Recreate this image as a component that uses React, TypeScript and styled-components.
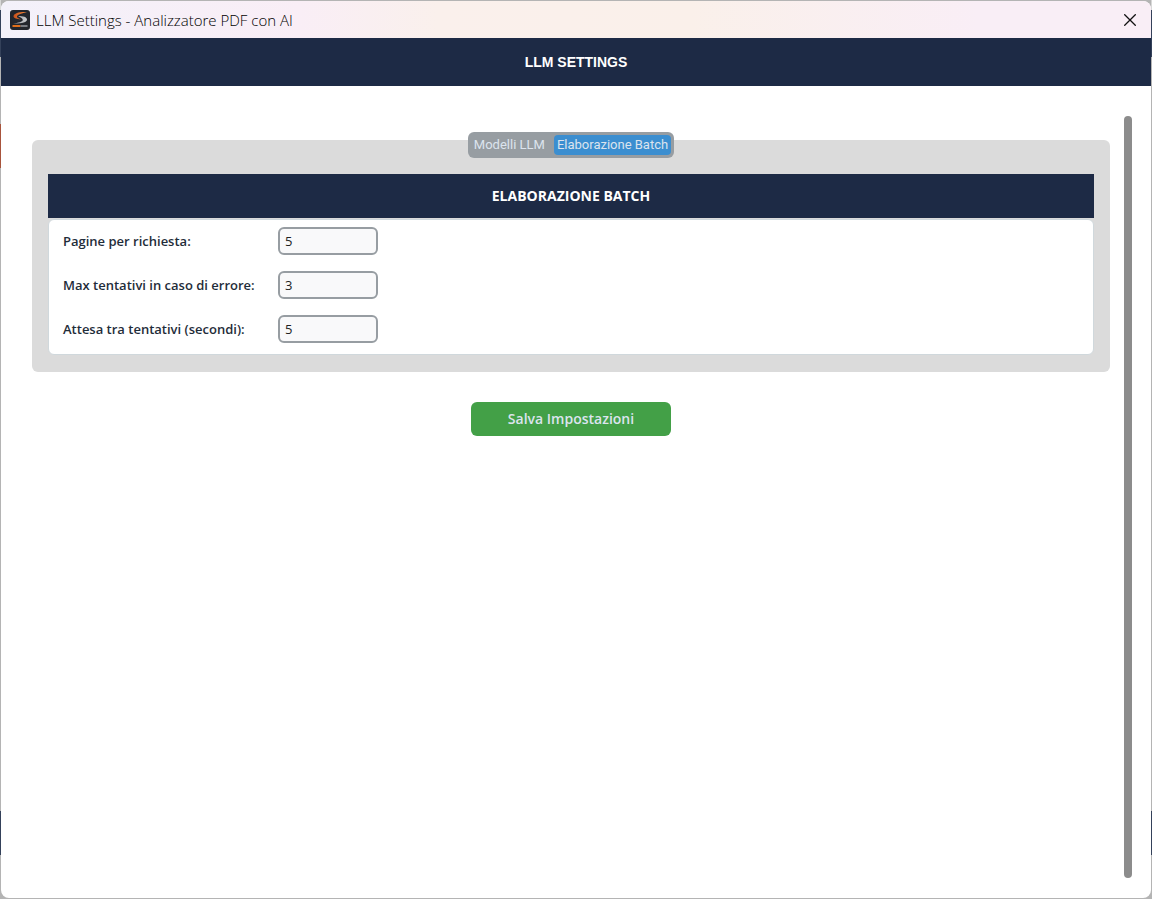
import React, { useState } from "react";
import styled, { createGlobalStyle } from "styled-components";

const navy = "#1d2a45";
const uiFont = `"Open Sans", "Noto Sans", sans-serif`;

const GlobalStyle = createGlobalStyle`
  *, *::before, *::after { box-sizing: border-box; }
  body { margin: 0; font-family: ${uiFont}; }
`;

/* The strip of desktop that shows round the dialog. */
const Desktop = styled.div`
  display: flex;
  min-height: 100vh;
  padding: 1px;
  background:
    linear-gradient(#d8d8d8 10px, #34415a 10px 57px, #b4b4b4 57px 124px, #a8543c 124px 168px,
      #b4b4b4 168px calc(100% - 88px), #34415a calc(100% - 88px) calc(100% - 44px),
      #b4b4b4 calc(100% - 44px)) left / 1px 100% no-repeat,
    linear-gradient(#d8d8d8 10px, #34415a 10px 57px, #b4b4b4 57px calc(100% - 88px),
      #34415a calc(100% - 88px) calc(100% - 44px), #b4b4b4 calc(100% - 44px)) right / 1px 100% no-repeat,
    #b4b4b4;
`;

const Dialog = styled.div`
  flex: 1;
  min-width: 0;
  display: flex;
  flex-direction: column;
  overflow: hidden;
  border-radius: 8px;
  background: #fff;
`;

const TitleBar = styled.header`
  display: flex;
  align-items: center;
  gap: 6px;
  height: 37px;
  padding-left: 9px;
  background: linear-gradient(90deg, #f3f1fa 0, #f9eef6 26%, #faf0ec 38%, #faf0ea 60%, #f9eef6 85%);
`;

const TitleText = styled.span`
  flex: 1;
  font-size: 15px;
  font-weight: 300;
  line-height: 20px;
  color: #000;
`;

const CloseButton = styled.button`
  display: flex;
  align-items: center;
  justify-content: center;
  width: 42px;
  height: 36px;
  padding: 0;
  border: 0;
  background: transparent;
  color: #111;
`;

const Banner = styled.h1`
  margin: 0;
  background: ${navy};
  color: #fff;
  font: bold 14px/48px "Liberation Sans", Arial, sans-serif;
  text-align: center;
`;

const Body = styled.div`
  flex: 1;
  display: flex;
  gap: 14px;
  padding: 30px 19px 20px 31px;
`;

const Content = styled.main`
  flex: 1;
  min-width: 0;
  padding-top: 16px;
`;

const ScrollThumb = styled.div`
  width: 8px;
  border-radius: 4px;
  background: #8c8c8c;
`;

const TabList = styled.div`
  position: relative;
  display: flex;
  gap: 6px;
  width: fit-content;
  margin: 0 auto -18px;
  padding: 3px;
  border-radius: 6px;
  background: #979da2;
`;

const Tab = styled.button<{ $active: boolean }>`
  height: 20px;
  padding: 0 3px;
  border: 0;
  border-radius: 4px;
  background: ${(p) => (p.$active ? "#3b8ed0" : "transparent")};
  color: #dce4ee;
  font: 13px/20px Roboto, sans-serif;
`;

const Panel = styled.section`
  padding: 34px 16px 17px;
  border-radius: 6px;
  background: #dbdbdb;
`;

const SectionTitle = styled.h2`
  margin: 0 0 1px;
  background: ${navy};
  color: #fff;
  font-size: 14px;
  line-height: 44px;
  text-align: center;
`;

const Form = styled.form`
  display: grid;
  grid-template-columns: 200px 100px;
  align-items: center;
  gap: 16px 15px;
  padding: 7px 14px 11px;
  border: 1px solid #d0d8dc;
  border-radius: 6px;
  background: #fff;
`;

const FieldLabel = styled.label`
  color: #1f2d3a;
  font-size: 13px;
  font-weight: 600;
  line-height: 20px;
`;

const NumberField = styled.input`
  width: 100%;
  height: 28px;
  padding: 0 5px;
  border: 2px solid #979da2;
  border-radius: 6px;
  background: #f9f9fa;
  color: #222;
  font: 13px/20px ${uiFont};
`;

const SaveButton = styled.button`
  display: block;
  width: 200px;
  height: 34px;
  margin: 30px auto 0;
  padding: 0;
  border: 0;
  border-radius: 6px;
  background: #43a047;
  color: #dce4ee;
  font: 600 14px/20px ${uiFont};
`;

const AppLogo = () => (
  <svg width="20" height="20" viewBox="0 0 20 20" aria-hidden="true">
    <defs>
      <linearGradient id="ribbonTop" x1="0" y1="0" x2="1" y2="0">
        <stop offset="0" stopColor="#c8501a" />
        <stop offset="1" stopColor="#f58a3c" />
      </linearGradient>
      <linearGradient id="ribbonEnd" x1="0" y1="0" x2="1" y2="0">
        <stop offset="0" stopColor="#8e9298" />
        <stop offset="1" stopColor="#c9ccd0" />
      </linearGradient>
    </defs>
    <rect width="20" height="20" rx="3" fill="#22262d" />
    <path d="M17 2 C10 1.500 4 3 3.500 6 C3.300 8.500 7 9 11 9.500 C9 8.500 6.500 8 7 6.300 C7.500 4.500 12 3.500 17 2 Z" fill="url(#ribbonTop)" />
    <path d="M8 6 C13 6 17 7 17 9.500 C17 12.500 11 13.800 3 13.500 C8 12.800 12.500 12 12.800 10 C13 8.500 10.500 7.500 8 6 Z" fill="url(#ribbonEnd)" />
    <path d="M2.500 16h8" stroke="#e0701c" strokeWidth="2" />
    <path d="M10.500 16h7" stroke="#777b82" strokeWidth="2" />
  </svg>
);

const fields = [
  { id: "pages", label: "Pagine per richiesta:", value: "5" },
  { id: "retries", label: "Max tentativi in caso di errore:", value: "3" },
  { id: "delay", label: "Attesa tra tentativi (secondi):", value: "5" },
];

const tabs = ["Modelli LLM", "Elaborazione Batch"];

export default function App() {
  const [active, setActive] = useState(tabs[1]);
  return (
    <>
      <GlobalStyle />
      <Desktop>
        <Dialog>
          <TitleBar>
            <AppLogo />
            <TitleText>LLM Settings - Analizzatore PDF con AI</TitleText>
            <CloseButton type="button" aria-label="Chiudi">
              <svg width="12" height="12" viewBox="0 0 12 12" fill="none" stroke="currentColor" strokeWidth="1.300">
                <path d="M0.300 0.300 11.700 11.700M11.700 0.300 0.300 11.700" />
              </svg>
            </CloseButton>
          </TitleBar>
          <Banner>LLM SETTINGS</Banner>
          <Body>
            <Content>
              <TabList role="tablist">
                {tabs.map((t) => (
                  <Tab
                    key={t}
                    type="button"
                    role="tab"
                    aria-selected={t === active}
                    $active={t === active}
                    onClick={() => setActive(t)}
                  >
                    {t}
                  </Tab>
                ))}
              </TabList>
              <Panel>
                <SectionTitle>ELABORAZIONE BATCH</SectionTitle>
                <Form id="batch" onSubmit={(e) => e.preventDefault()}>
                  {fields.map((f) => (
                    <React.Fragment key={f.id}>
                      <FieldLabel htmlFor={f.id}>{f.label}</FieldLabel>
                      <NumberField id={f.id} type="text" inputMode="numeric" defaultValue={f.value} />
                    </React.Fragment>
                  ))}
                </Form>
              </Panel>
              <SaveButton type="submit" form="batch">Salva Impostazioni</SaveButton>
            </Content>
            <ScrollThumb />
          </Body>
        </Dialog>
      </Desktop>
    </>
  );
}
